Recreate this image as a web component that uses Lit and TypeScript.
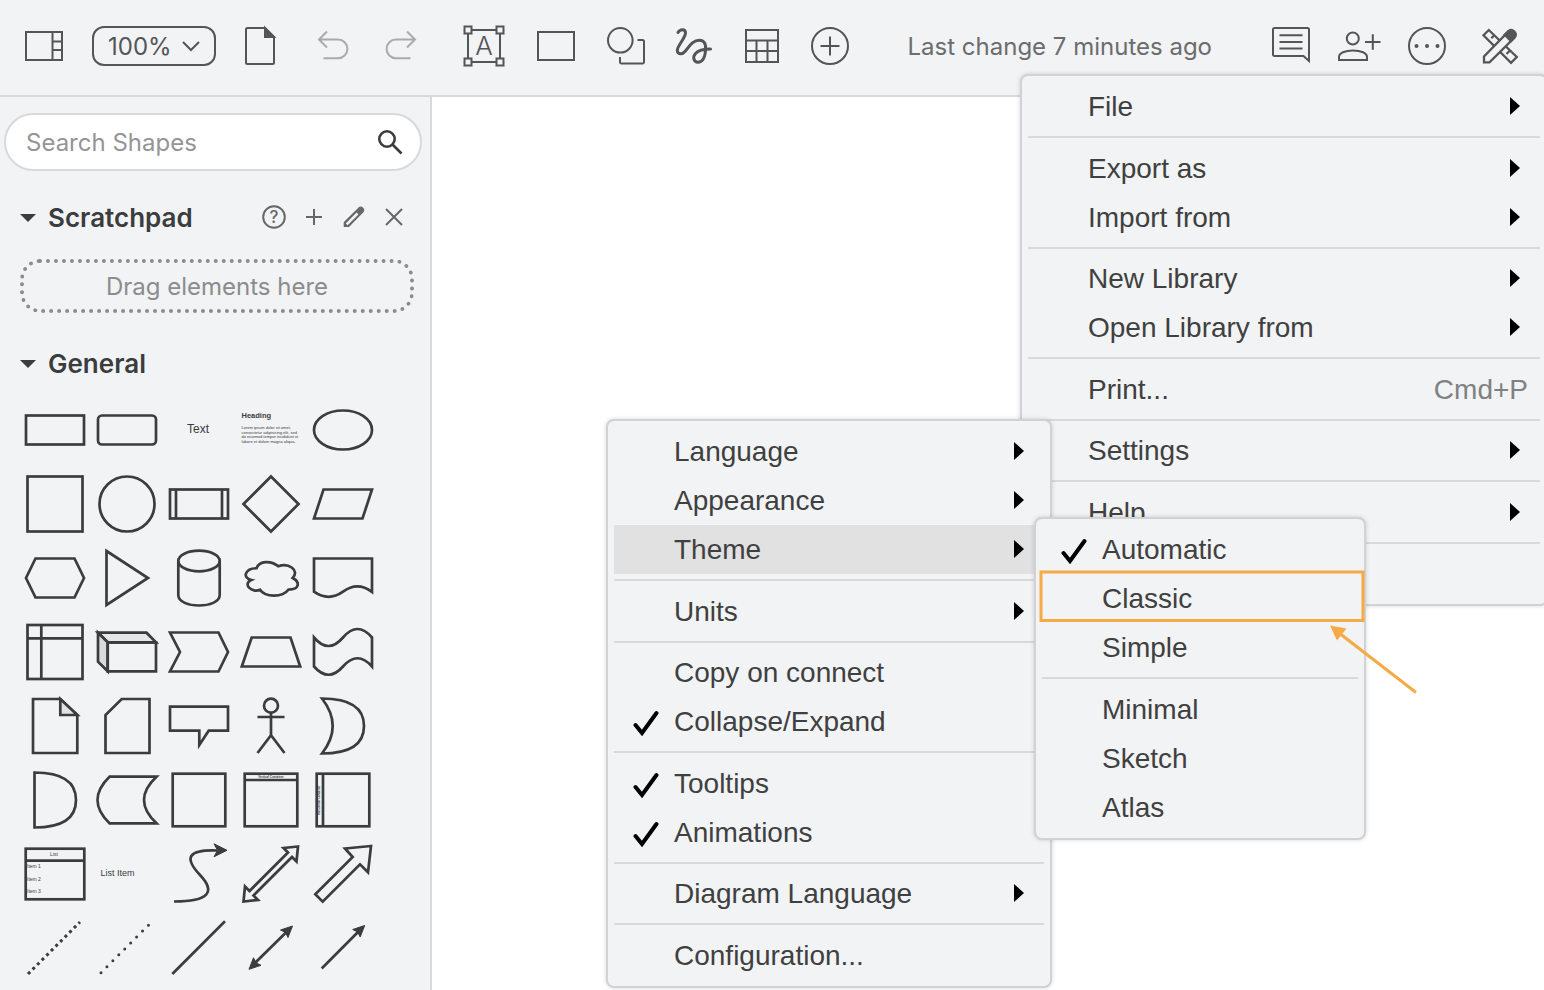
import { LitElement, html, svg, css, nothing, type TemplateResult } from "lit";
import { customElement, property } from "lit/decorators.js";

type Entry =
  | { label: string; submenu?: boolean; checked?: boolean; active?: boolean; shortcut?: string }
  | "-";

const MAIN_MENU: Entry[] = [
  { label: "File", submenu: true },
  "-",
  { label: "Export as", submenu: true },
  { label: "Import from", submenu: true },
  "-",
  { label: "New Library", submenu: true },
  { label: "Open Library from", submenu: true },
  "-",
  { label: "Print...", shortcut: "Cmd+P" },
  "-",
  { label: "Settings", submenu: true },
  "-",
  { label: "Help", submenu: true },
  "-",
  { label: "" },
];

const SETTINGS_MENU: Entry[] = [
  { label: "Language", submenu: true },
  { label: "Appearance", submenu: true },
  { label: "Theme", submenu: true, active: true },
  "-",
  { label: "Units", submenu: true },
  "-",
  { label: "Copy on connect" },
  { label: "Collapse/Expand", checked: true },
  "-",
  { label: "Tooltips", checked: true },
  { label: "Animations", checked: true },
  "-",
  { label: "Diagram Language", submenu: true },
  "-",
  { label: "Configuration..." },
];

const THEME_MENU: Entry[] = [
  { label: "Automatic", checked: true },
  { label: "Classic" },
  { label: "Simple" },
  "-",
  { label: "Minimal" },
  { label: "Sketch" },
  { label: "Atlas" },
];

@customElement("popup-menu")
export class PopupMenu extends LitElement {
  @property({ attribute: false }) entries: Entry[] = [];

  static styles = css`
    :host {
      display: block;
      box-sizing: border-box;
      padding: 6px;
      border: 2px solid #d1d2d3;
      border-radius: 8px;
      background: #f1f3f4;
      box-shadow: 0 0 4px rgba(0, 0, 0, 0.16);
      font-family: "Liberation Sans", Arial, sans-serif;
    }
    button {
      display: grid;
      grid-template-columns: 60px 1fr auto;
      align-items: center;
      width: 100%;
      height: 49px;
      padding: 0;
      border: 0;
      background: none;
      color: #404040;
      font: inherit;
      font-size: 28px;
      line-height: 48px;
      text-align: left;
      white-space: nowrap;
    }
    button.active {
      background: #e1e1e1;
    }
    hr {
      height: 2px;
      margin: 5px 0 6px;
      border: 0;
      background: #d8d9da;
    }
    hr:nth-of-type(even) {
      margin-bottom: 5px;
    }
    .check {
      display: block;
      width: 26px;
      height: 26px;
      margin: 3px 0 0 19px;
    }
    .arrow {
      display: block;
      width: 10px;
      height: 18px;
      margin: 0 20px 1px 0;
    }
    .shortcut {
      margin-right: 12px;
      color: #808182;
    }
  `;

  render() {
    return this.entries.map((entry) =>
      entry === "-"
        ? html`<hr />`
        : html`<button role="menuitem" class=${entry.active ? "active" : ""}>
            <span>
              ${entry.checked
                ? html`<svg class="check" viewBox="0 0 26 26">
                    <path d="M2.500 15 9 23 23.500 3" fill="none" stroke="#000" stroke-width="4" stroke-linecap="round" />
                  </svg>`
                : nothing}
            </span>
            <span>${entry.label}</span>
            ${entry.submenu
              ? html`<svg class="arrow" viewBox="0 0 10 18"><path d="M0 0 10 9 0 18z" fill="#000" /></svg>`
              : entry.shortcut
                ? html`<span class="shortcut">${entry.shortcut}</span>`
                : nothing}
          </button>`
    );
  }
}

const arrowHead = (x: number, y: number, flip = false) =>
  svg`<path class="solid" d=${flip
    ? `M${x} ${y}l12-4-5-2.500-2.500-5z`
    : `M${x} ${y}l-12 4 5 2.500 2.500 5z`} />`;

/* Palette entries are drawn around the centre of a 72 x 74 cell. */
const SHAPES: [string, TemplateResult][] = [
  ["Rectangle", svg`<rect x="-29" y="-14.5" width="58" height="29" />`],
  ["Rounded Rectangle", svg`<rect x="-29" y="-14.5" width="58" height="29" rx="4" />`],
  ["Text", svg`<text x="-1" y="3" font-size="12" text-anchor="middle">Text</text>`],
  [
    "Textbox",
    svg`<text x="-29.5" y="-12" font-size="7.5" font-weight="bold">Heading</text>
      <text font-size="4"><tspan x="-29.5" y="-1">Lorem ipsum dolor sit amet,</tspan><tspan x="-29.5" y="4">consectetur adipisicing elit, sed</tspan><tspan x="-29.5" y="8">do eiusmod tempor incididunt ut</tspan><tspan x="-29.5" y="13">labore et dolore magna aliqua.</tspan></text>`,
  ],
  ["Ellipse", svg`<ellipse rx="29" ry="19.5" />`],
  ["Square", svg`<rect x="-27.5" y="-27.5" width="55" height="55" />`],
  ["Circle", svg`<circle r="27.5" />`],
  ["Process", svg`<rect x="-29" y="-14.5" width="58" height="29" /><path d="M-23-14.5v29M23-14.5v29" />`],
  ["Diamond", svg`<path d="M0-27.5 27.5 0 0 27.5-27.5 0z" />`],
  ["Parallelogram", svg`<path d="M-19.5-14.5H29L19.5 14.5H-29z" />`],
  ["Hexagon", svg`<path d="M-19.5-19.5h39L29 0 19.5 19.5h-39L-29 0z" />`],
  ["Triangle", svg`<path d="M-20.5-27 21 0-20.5 27z" />`],
  ["Cylinder", svg`<ellipse cy="-17" rx="20.7" ry="10.3" /><path d="M-20.7-17v34C-20.7 31 20.7 31 20.7 17v-34" />`],
  [
    "Cloud",
    svg`<path d="M-14.5-9.75C-26.1-9.75-29 0-19.7 1.95-29 6.2-18.6 15.6-11 11.7-5.8 19.5 11.6 19.5 17.4 11.7 29 11.7 29 3.9 21.75 0 29-7.8 17.4-15.6 7.25-11.7 0-17.55-11.6-17.55-14.5-9.75z" />`,
  ],
  ["Document", svg`<path d="M-29-19.5H29V14Q14.5 3 0 13.7-14.5 24-29 13.7z" />`],
  ["Internal Storage", svg`<rect x="-27.5" y="-27" width="55" height="54" /><path d="M-13.7-27v54M-27.5-13.7h55" />`],
  [
    "Cube",
    svg`<path d="M-29-19.3h48.5L29-9.7h-48.3z" fill="#e5e6e8" /><path d="M-29-19.3l9.7 9.6v29L-29 9.7z" fill="#d9dadc" /><path d="M-19.3-9.7H29v29h-48.3z" />`,
  ],
  ["Step", svg`<path d="M-29-19.5h48.5L29 0l-9.5 19.5H-29L-19 0z" />`],
  ["Trapezoid", svg`<path d="M-19.3-14.5h38.8l9.7 29h-58.4z" />`],
  ["Tape", svg`<path d="M-29-14.5Q-14.5 2.5 0-14.5T29-14.5v29Q14.5-2 0 14.5T-29 14.5z" />`],
  ["Note", svg`<path d="M-22-27H5.3L22.3-11v38H-22z" /><path d="M5.3-27v16h17z" fill="#e2e3e5" />`],
  ["Card", svg`<path d="M-5.3-27h27.8v54h-44v-38z" />`],
  ["Callout", svg`<path d="M-29-19.3h58v24H9.7L.3 19V4.7H-29z" />`],
  ["Actor", svg`<circle cy="-20.3" r="7" /><path d="M0-13.3V9.3M-13.5-9h27M-13.5 27 0 9.3 13.5 27" />`],
  ["Or", svg`<path d="M-21-27.5Q21-27.5 21 0T-21 27.5Q.4 0-21-27.5z" />`],
  ["And", svg`<path d="M-20.5-27.5Q21-27.5 21 0T-20.5 27.5z" />`],
  ["Data Storage", svg`<path d="M-17.5-23.3h47Q4.5 0 29.5 23.3h-47Q-41.5 0-17.5-23.3z" />`],
  ["Container", svg`<rect x="-26.3" y="-26.3" width="52.6" height="52.6" />`],
  [
    "Vertical Container",
    svg`<rect x="-26.3" y="-26.3" width="52.6" height="52.6" /><path d="M-26.3-20h52.6" />
      <text y="-22.5" font-size="3" font-weight="bold" text-anchor="middle">Vertical Container</text>`,
  ],
  [
    "Horizontal Container",
    svg`<rect x="-26.3" y="-26.3" width="52.6" height="52.6" /><path d="M-20-26.3v52.6" />
      <text transform="rotate(-90)" y="-23" font-size="3" font-weight="bold" text-anchor="middle">Horizontal Container</text>`,
  ],
  [
    "List",
    svg`<rect x="-29.3" y="-25.3" width="58.6" height="50.6" /><path d="M-29.3-13.3h58.6" />
      <text x="-1" y="-18" font-size="5" text-anchor="middle">List</text>
      <text font-size="5"><tspan x="-28" y="-6">Item 1</tspan><tspan x="-28" y="7">Item 2</tspan><tspan x="-28" y="19">Item 3</tspan></text>`,
  ],
  ["List Item", svg`<text x="-26.5" y="2" font-size="9">List Item</text>`],
  [
    "Curve",
    svg`<path d="M-25 27.5C10 27.5 17 18 1 1-16-17-10-24.5 18-23.5" /><path class="solid" d="M28-23.700l-13-6.500 3.500 6.500-3.500 6.500z" />`,
  ],
  [
    "Bidirectional Arrow",
    svg`<path d="M27-27.5 12.5-26l4.5 4.5L-21.5 17l-4.5-4.5-1.5 15L-13 26l-4.5-4.5L21-17l4.5 4.5z" />`,
  ],
  ["Arrow", svg`<path d="M28-28 2-25.5l7.7 8.5-37.4 37.3 7.4 7.4L17-9.7l8 8z" />`],
  ["Dashed Line", svg`<path d="M-27 26 25-26" stroke-width="3" stroke-dasharray="3 3.5" />`],
  ["Dotted Line", svg`<path d="M-26 24.7 21.6-23" stroke-width="3" stroke-linecap="round" stroke-dasharray="0 8.4" />`],
  ["Line", svg`<path d="M-26.7 26 26-26.7" />`],
  ["Bidirectional Connector", svg`<path d="M-17 16 17-17.5" />${arrowHead(21.5, -22)}${arrowHead(-22, 21.3, true)}`],
  ["Directional Connector", svg`<path d="M-21.3 20.5 17-18" />${arrowHead(21.7, -22.5)}`],
];

type Tool = { name: string; box: number; art: TemplateResult; disabled?: boolean };

/* Toolbar glyphs share one 68 px tall strip; box is the left edge of the slot in it. */
const PANEL: Tool = {
  name: "Shapes panel",
  box: 12,
  art: svg`<path d="M26 32h36v28H26zM52.5 32v28M52.5 41.5H62M52.5 50H62" />`,
};
const PAGE: Tool = {
  name: "Pages",
  box: 228,
  art: svg`<path d="M247.500 28H265l9 9v25.500a1.500 1.500 0 0 1-1.500 1.500h-25a1.500 1.500 0 0 1-1.500-1.500v-33a1.500 1.500 0 0 1 1.500-1.500z" /><path class="solid" d="M265 28v9h9z" />`,
};
const HISTORY: Tool[] = [
  {
    name: "Undo",
    box: 300,
    disabled: true,
    art: svg`<path d="M327 31.500l-8 8 8 8M319 39.500h19a9.400 9.400 0 0 1 0 18.800h-14.500" />`,
  },
  {
    name: "Redo",
    box: 368,
    disabled: true,
    art: svg`<path d="M407 31.500l8 8-8 8M415 39.500h-19a9.400 9.400 0 0 0 0 18.800h14.500" />`,
  },
];
const TEXT: Tool = {
  name: "Text",
  box: 448,
  art: svg`<path d="M464.500 26.500h7v7h-7zM496.500 26.500h7v7h-7zM464.500 58.500h7v7h-7zM496.500 58.500h7v7h-7zM471.500 30h25M471.500 62h25M468 33.500v25M500 33.500v25" /><text x="484" y="54.500" font-size="26" font-weight="300" text-anchor="middle">A</text>`,
};
const INSERT: Tool[] = [
  { name: "Rectangle", box: 520, art: svg`<path d="M538 32h36v28h-36z" />` },
  {
    name: "Shapes",
    box: 588,
    art: svg`<circle cx="620.300" cy="40.300" r="12.300" /><path d="M637.500 40h5a1.500 1.500 0 0 1 1.500 1.500v20.500a1.500 1.500 0 0 1-1.500 1.500h-21a1.500 1.500 0 0 1-1.500-1.500V57" />`,
  },
  {
    name: "Freehand",
    box: 656,
    art: svg`<path stroke-width="3" stroke-linecap="round" d="M678 32.500C680 29 685.500 28.500 685.500 33 685.500 38 677 46 677.300 50.500 677.600 54.500 682 55 685 51.500 689 47 692 40.300 699.500 40.300 705 40.300 706 45 705.600 50 705 57 702.500 62.300 698 62.300 693.500 62 692.500 57 695.500 53.500 698.500 50 704 49 710.500 49" />`,
  },
  { name: "Table", box: 724, art: svg`<path d="M746 30h32v32h-32zM746 40.500h32M746 51h32M756.500 40.500V62M767.500 40.500V62" />` },
  { name: "Insert", box: 792, art: svg`<circle cx="830" cy="46" r="18" /><path d="M820.500 46h19M830 36.500v19" />` },
];
const SHARING: Tool[] = [
  {
    name: "Comments",
    box: 1258,
    art: svg`<path d="M1274.500 28h33a1.500 1.500 0 0 1 1.500 1.500V61l-5.500-5h-29a1.500 1.500 0 0 1-1.500-1.500v-25a1.500 1.500 0 0 1 1.500-1.500zM1279.500 35.300h23M1279.500 42h23M1279.500 48.500h23" />`,
  },
  {
    name: "Share",
    box: 1326,
    art: svg`<circle cx="1352.800" cy="38.500" r="6" /><path d="M1339 60v-3c0-4 6-6.500 14-6.500s14 2.500 14 6.500v3zM1365 42h15.500M1372.800 34.300v15.500" />`,
  },
  {
    name: "More",
    box: 1394,
    art: svg`<circle cx="1427" cy="46" r="18" /><path stroke-width="4" stroke-linecap="round" d="M1416.500 46h.01M1427 46h.01M1437.500 46h.01" />`,
  },
];
const FORMAT: Tool = {
  name: "Format",
  box: 1466,
  art: svg`<path d="M1483.500 35.300l5.300-5.300 28 27-5.800 5.800zM1491.300 38.300l3-3M1506.500 54l3-3" stroke-width="2.300" /><path d="M1484 62.300V56.500l23.500-24 6 6-24 23.800z" fill="#f1f3f4" stroke-width="2.300" /><path class="solid" d="M1504.500 34.800l4-4c4-3 9.500 2.500 6.500 6.500l-4 4z" />`,
};

const toolButton = (tool: Tool) => html`
  <button class="tool ${tool.disabled ? "faded" : ""}" aria-label=${tool.name} ?disabled=${tool.disabled}>
    <svg viewBox="${tool.box} 12 68 68">${tool.art}</svg>
  </button>
`;

@customElement("app-root")
export class AppRoot extends LitElement {
  static styles = css`
    :host {
      position: relative;
      display: grid;
      grid-template: auto 1fr / 432px 1fr;
      height: 100vh;
      overflow: hidden;
      background: #fff;
      color: #3b3c3d;
      font-family: Inter, sans-serif;
    }
    button {
      display: block;
      padding: 0;
      border: 0;
      background: none;
      color: inherit;
      font: inherit;
    }
    svg {
      display: block;
      overflow: visible;
      fill: none;
      stroke: currentColor;
    }
    svg text {
      fill: currentColor;
      stroke: none;
    }
    svg .solid {
      fill: currentColor;
    }
    .toolbar {
      grid-column: 1 / -1;
      display: flex;
      align-items: center;
      gap: 12px;
      padding: 12px 10px 15px 12px;
      border-bottom: 2px solid #d8d9da;
      background: #f1f3f4;
      color: #545556;
    }
    .group {
      display: flex;
    }
    .wide {
      gap: 4px;
    }
    .tool,
    .tool svg {
      width: 68px;
      height: 68px;
      stroke-width: 2;
    }
    .faded {
      color: #a9aaab;
    }
    .zoom {
      display: flex;
      align-items: center;
      justify-content: space-between;
      box-sizing: border-box;
      width: 124px;
      height: 40px;
      padding: 0 14px;
      border: 2px solid currentColor;
      border-radius: 12px;
      font-size: 24px;
    }
    .zoom svg {
      width: 18px;
      height: 10px;
      stroke-width: 2;
    }
    .status {
      margin: 2px 34px 0 auto;
      color: #6b6c6d;
      font-size: 24px;
      line-height: 32px;
      white-space: nowrap;
    }
    .sidebar {
      box-sizing: border-box;
      padding: 16px 8px 0 4px;
      border-right: 2px solid #d8d9da;
      background: #f1f3f4;
      overflow: hidden;
    }
    .search {
      display: flex;
      align-items: center;
      box-sizing: border-box;
      height: 58px;
      padding: 0 16px 0 20px;
      border: 2px solid #d8d9da;
      border-radius: 29px;
      background: #fff;
    }
    .search input {
      flex: 1;
      min-width: 0;
      padding: 0;
      border: 0;
      outline: 0;
      background: none;
      font: inherit;
      font-size: 24px;
    }
    .search input::placeholder {
      color: #949596;
    }
    .search svg {
      width: 26px;
      height: 26px;
      stroke-width: 2.6;
    }
    .title {
      display: flex;
      align-items: center;
      height: 50px;
      margin: 22px 0 16px;
      padding: 0 8px 0 16px;
    }
    .title h2 {
      flex: 1;
      margin: 0 0 0 12px;
      font-size: 26px;
      font-weight: 600;
      line-height: 32px;
    }
    .title .caret {
      width: 16px;
      height: 8px;
      stroke: none;
    }
    .title button {
      color: #666768;
    }
    .title button svg {
      width: 40px;
      height: 40px;
      stroke-width: 2;
    }
    .drop {
      box-sizing: border-box;
      height: 54px;
      margin: 0 8px 0 16px;
      border: 4px dotted #8b8c8d;
      border-radius: 20px;
      color: #8b8c8d;
      font-size: 24px;
      line-height: 48px;
      text-align: center;
    }
    .title.general {
      margin: 26px 0 4px;
    }
    .palette {
      display: grid;
      grid-template-columns: repeat(5, 72px);
      margin-left: 15px;
    }
    .palette svg {
      width: 72px;
      height: 74px;
      stroke-width: 2.7;
      font-family: "Liberation Sans", Arial, sans-serif;
    }
    .palette .solid {
      stroke-width: 1;
    }
    .menu {
      position: absolute;
    }
    .main-menu {
      top: 74px;
      right: -4px;
      width: 528px;
    }
    .settings-menu {
      top: 419px;
      right: 492px;
      width: 446px;
    }
    .theme-menu {
      top: 517px;
      right: 178px;
      width: 332px;
    }
    .pointer {
      position: absolute;
      top: 560px;
      right: 124px;
      width: 384px;
      height: 140px;
      color: #f4aa45;
      stroke-width: 3;
      pointer-events: none;
    }
  `;

  render() {
    return html`
      <header class="toolbar">
        ${toolButton(PANEL)}
        <button class="zoom">
          100%
          <svg viewBox="0 0 18 10"><path d="M1 1l8 8 8-8" /></svg>
        </button>
        <div class="group wide">
          ${toolButton(PAGE)}
          <div class="group">${HISTORY.map(toolButton)}</div>
        </div>
        <div class="group wide">
          ${toolButton(TEXT)}
          <div class="group">${INSERT.map(toolButton)}</div>
        </div>
        <span class="status">Last change 7 minutes ago</span>
        <div class="group wide">
          <div class="group">${SHARING.map(toolButton)}</div>
          ${toolButton(FORMAT)}
        </div>
      </header>

      <aside class="sidebar">
        <label class="search">
          <input type="text" placeholder="Search Shapes" aria-label="Search Shapes" />
          <svg viewBox="0 0 26 26"><circle cx="9" cy="10" r="7.700" /><path d="M14.500 15.500 23.500 24.500" /></svg>
        </label>

        <div class="title">
          <svg class="caret" viewBox="0 0 16 8"><path class="solid" d="M0 0h16L8 8z" /></svg>
          <h2>Scratchpad</h2>
          <button aria-label="Help">
            <svg viewBox="0 1 40 40">
              <circle cx="20" cy="20" r="10.800" />
              <text x="20" y="26" font-size="17" font-weight="500" text-anchor="middle">?</text>
            </svg>
          </button>
          <button aria-label="Add"><svg viewBox="0 1 40 40"><path d="M12 20h16M20 12v16" /></svg></button>
          <button aria-label="Edit">
            <svg viewBox="0 1 40 40">
              <path d="M10.300 29.500v-4L25 10.800c2.500-2 6 1.500 4 4L14.500 29.500z" fill="currentColor" stroke-width="1.200" stroke-linejoin="round" />
              <path d="M12.700 27.300 23.500 16.500" stroke="#f1f3f4" stroke-width="2.600" />
            </svg>
          </button>
          <button aria-label="Close"><svg viewBox="0 1 40 40"><path d="M12 12l16 16M28 12 12 28" /></svg></button>
        </div>
        <div class="drop">Drag elements here</div>

        <div class="title general">
          <svg class="caret" viewBox="0 0 16 8"><path class="solid" d="M0 0h16L8 8z" /></svg>
          <h2>General</h2>
        </div>
        <div class="palette">
          ${SHAPES.map(
            ([name, art]) => html`<button aria-label=${name}><svg viewBox="-36 -37 72 74">${art}</svg></button>`
          )}
        </div>
      </aside>

      <main></main>

      <popup-menu class="menu main-menu" role="menu" .entries=${MAIN_MENU}></popup-menu>
      <popup-menu class="menu settings-menu" role="menu" .entries=${SETTINGS_MENU}></popup-menu>
      <popup-menu class="menu theme-menu" role="menu" .entries=${THEME_MENU}></popup-menu>
      <svg class="pointer" viewBox="1036 560 384 140">
        <path d="M1041 572h322v48.500h-322zM1416 692.500l-75-58" />
        <path class="solid" stroke="none" d="M1330 625.500l16.500 3-9.500 12z" />
      </svg>
    `;
  }
}
